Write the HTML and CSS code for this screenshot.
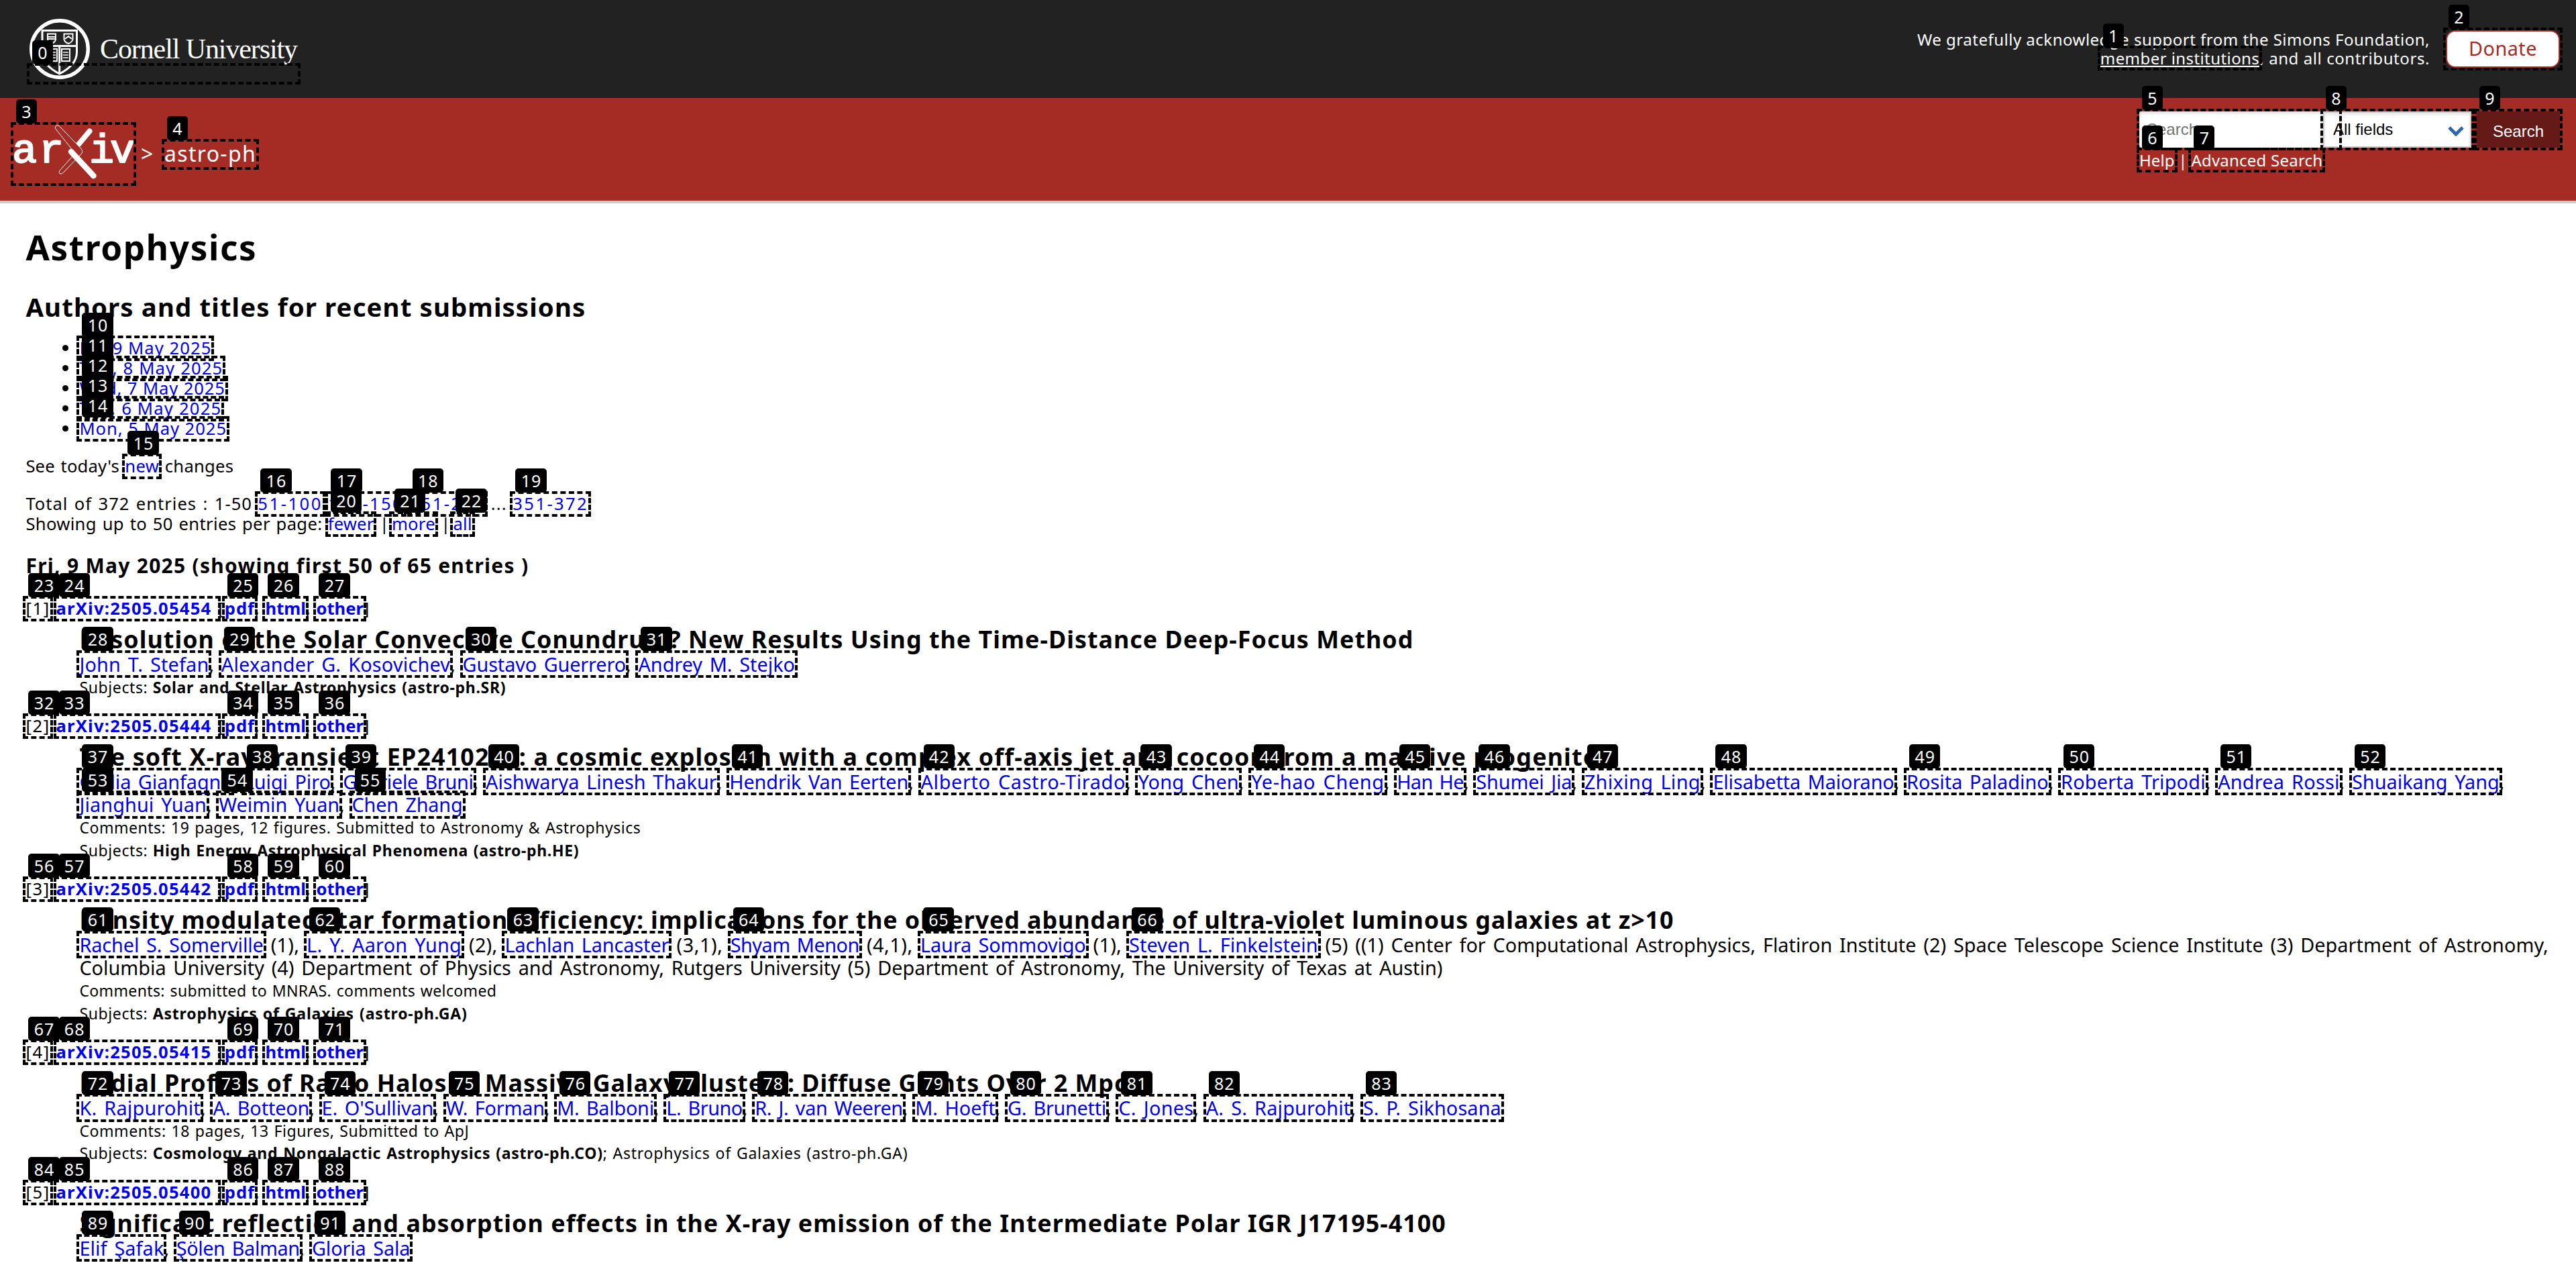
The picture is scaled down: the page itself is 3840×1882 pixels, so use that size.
FILE: index.html
```html
<!DOCTYPE html>
<html lang="en">
<head>
<meta charset="utf-8">
<title>Astrophysics</title>
<link rel="stylesheet" href="styles.css">
</head>
<body>
<header>
  <div class="topbar">
    <a class="brand mark block">
      <svg class="seal" viewBox="0 0 90 90" fill="none" stroke="#fff">
        <circle cx="45" cy="45" r="42.3" stroke-width="5.4"/>
        <path d="M19 17.5H70.500V50C70.500 64 60 74 44.700 82C29 74 19 64 19 50Z" stroke-width="3"/>
        <path d="M19 40.500H70.500M44.700 42V80" stroke-width="3"/>
        <path d="M27 22.500H39V31Q38 35 33 37Q28 35 27 31ZM27 27H39M27 30H39M51.500 22.500H64.500V31Q63 35 58 37Q52.500 35 51.500 31ZM53 30L58 26L63 30" stroke-width="2"/>
        <path d="M29 45H41V63H29ZM48 45H60V63H48Z" stroke-width="2"/>
        <path d="M31 50H39M31 54H39M31 58H39M50 50H58M50 54H58M50 58H58" stroke-width="1.600"/>
      </svg>
      <span class="brand-name"><span data-w="294">Cornell University</span></span>
      <b class="tag">0</b>
    </a>
    <div class="thanks">
      <div class="support"><span data-w="764">We gratefully acknowledge support from the Simons Foundation,</span><br><a class="mark under" data-w="237.5">member institutions<b class="tag">1</b></a><span data-w="253.7">, and all contributors.</span></div>
      <a class="donate mark block"><span data-w="102">Donate</span><b class="tag">2</b></a>
    </div>
  </div>
  <div class="redbar">
    <div class="crumbs">
      <a class="logo mark block">
        <svg viewBox="0 0 179 87">
          <g class="logo-type"><text x="-2" y="56">a</text><text x="38" y="56">r</text><text x="113" y="56">i</text><text x="144" y="56">v</text></g>
          <path d="M113.500 9.500L95.500 31" stroke="#fff" stroke-width="8" stroke-linecap="round"/>
          <path d="M62.500 5.500Q62 1 65.500 .8Q67.500 .7 69 2.500L100.500 35Q104.500 39.500 101 43.500L74 71.500Q71 74.500 68.800 72.500Q67 70.500 69.500 67.500L92 42.500Z" fill="#a52c25" stroke="#fff"/>
          <path d="M86 40L119.500 76" stroke="#fff" stroke-width="8.500" stroke-linecap="round"/>
        </svg>
        <b class="tag">3</b>
      </a>
      <span class="sep">&gt;</span>
      <a class="mark crumb" data-w="137">astro-ph<b class="tag">4</b></a>
    </div>
    <div class="search">
      <div class="controls">
        <label class="field mark block"><input placeholder="Search"><b class="tag">5</b></label>
        <div class="select mark block"><span>All fields</span><svg viewBox="0 0 24 16"><path d="M2 3L12 13L22 3" fill="none" stroke="#2c68ab" stroke-width="5"/></svg><b class="tag t8">8</b></div>
        <div class="go mark block">Search<b class="tag">9</b></div>
      </div>
      <div class="help"><a class="mark" data-w="52.5">Help<b class="tag">6</b></a><span class="bar">|</span><a class="mark" data-w="196">Advanced Search<b class="tag">7</b></a></div>
    </div>
  </div>
</header>
<main>
  <h1><span data-w="345">Astrophysics</span></h1>
  <h2><span data-w="835">Authors and titles for recent submissions</span></h2>
  <ul>
    <li><a class="mark" data-w="197">Fri, 9 May 2025<b class="tag">10</b></a></li>
    <li><a class="mark" data-w="214">Thu, 8 May 2025<b class="tag">11</b></a></li>
    <li><a class="mark" data-w="217.5">Wed, 7 May 2025<b class="tag">12</b></a></li>
    <li><a class="mark" data-w="212">Tue, 6 May 2025<b class="tag">13</b></a></li>
    <li><a class="mark" data-w="219.6">Mon, 5 May 2025<b class="tag">14</b></a></li>
  </ul>
  <p><span data-w="139.5">See today's</span> <a class="mark" data-w="51">new<b class="tag">15</b></a> <span data-w="102.5">changes</span></p>
  <p><span data-w="337.5">Total of 372 entries : 1-50</span> <a class="mark" data-w="96.500">51-100<b class="tag">16</b></a> <a class="mark" data-w="112.8">101-150<b class="tag">17</b></a> <a class="mark" data-w="112.8">151-200<b class="tag">18</b></a> <span data-w="24">...</span> <a class="mark" data-w="112.8">351-372<b class="tag">19</b></a></p>
  <p class="tight"><span data-w="442">Showing up to 50 entries per page:</span> <a class="mark" data-w="68.500">fewer<b class="tag">20</b></a> <span data-w="9.600">|</span> <a class="mark" data-w="65">more<b class="tag">21</b></a> <span data-w="9.600">|</span> <a class="mark" data-w="28.5">all<b class="tag">22</b></a></p>
  <h3><span data-w="750">Fri, 9 May 2025 (showing first 50 of 65 entries )</span></h3>

  <article>
    <div class="id"><a class="mark num" data-w="36.5">[1]<b class="tag">23</b></a> <a class="mark" data-w="241.7">arXiv:2505.05454 <b class="tag">24</b></a><span data-w="9.6">[</span><a class="mark" data-w="45.1">pdf<b class="tag">25</b></a>, <a class="mark" data-w="60.5">html<b class="tag">26</b></a>, <a class="mark" data-w="70.4">other<b class="tag">27</b></a>]</div>
    <div class="title"><span data-w="1989">Resolution of the Solar Convective Conundrum? New Results Using the Time-Distance Deep-Focus Method</span></div>
    <div class="authors"><a class="mark" data-w="193">John T. Stefan<b class="tag">28</b></a>, <a class="mark" data-w="341.4">Alexander G. Kosovichev<b class="tag">29</b></a>, <a class="mark" data-w="243.4">Gustavo Guerrero<b class="tag">30</b></a>, <a class="mark" data-w="233.6">Andrey M. Stejko<b class="tag">31</b></a></div>
    <div class="meta"><span data-w="102">Subjects:</span> <b data-w="526.5">Solar and Stellar Astrophysics (astro-ph.SR)</b></div>
  </article>

  <article>
    <div class="id"><a class="mark num" data-w="36.5">[2]<b class="tag">32</b></a> <a class="mark" data-w="241.7">arXiv:2505.05444 <b class="tag">33</b></a><span data-w="9.6">[</span><a class="mark" data-w="45.1">pdf<b class="tag">34</b></a>, <a class="mark" data-w="60.5">html<b class="tag">35</b></a>, <a class="mark" data-w="70.4">other<b class="tag">36</b></a>]</div>
    <div class="title"><span data-w="2282">The soft X-ray transient EP241021a: a cosmic explosion with a complex off-axis jet and cocoon from a massive progenitor</span></div>
    <div class="authors"><a class="mark" data-w="227">Giulia Gianfagna<b class="tag">37</b></a>, <a class="mark" data-w="129">Luigi Piro<b class="tag">38</b></a>, <a class="mark" data-w="194.4">Gabriele Bruni<b class="tag">39</b></a>, <a class="mark" data-w="344.7">Aishwarya Linesh Thakur<b class="tag">40</b></a>, <a class="mark" data-w="267">Hendrik Van Eerten<b class="tag">41</b></a>, <a class="mark" data-w="305.5">Alberto Castro-Tirado<b class="tag">42</b></a>, <a class="mark" data-w="150.4">Yong Chen<b class="tag">43</b></a>, <a class="mark" data-w="198.5">Ye-hao Cheng<b class="tag">44</b></a>, <a class="mark" data-w="99.8">Han He<b class="tag">45</b></a>, <a class="mark" data-w="143">Shumei Jia<b class="tag">46</b></a>, <a class="mark" data-w="173.2">Zhixing Ling<b class="tag">47</b></a>, <a class="mark" data-w="270.3">Elisabetta Maiorano<b class="tag">48</b></a>, <a class="mark" data-w="211.6">Rosita Paladino<b class="tag">49</b></a>, <a class="mark" data-w="215.7">Roberta Tripodi<b class="tag">50</b></a>, <a class="mark" data-w="181.4">Andrea Rossi<b class="tag">51</b></a>, <a class="mark" data-w="219.8">Shuaikang Yang<b class="tag">52</b></a>,<br><a class="mark" data-w="189.5">Jianghui Yuan<b class="tag">53</b></a>, <a class="mark" data-w="179.8">Weimin Yuan<b class="tag">54</b></a>, <a class="mark" data-w="165">Chen Zhang<b class="tag">55</b></a></div>
    <div class="meta"><span data-w="837">Comments: 19 pages, 12 figures. Submitted to Astronomy &amp; Astrophysics</span></div>
    <div class="meta more"><span data-w="102">Subjects:</span> <b data-w="635.5">High Energy Astrophysical Phenomena (astro-ph.HE)</b></div>
  </article>

  <article>
    <div class="id"><a class="mark num" data-w="36.5">[3]<b class="tag">56</b></a> <a class="mark" data-w="241.7">arXiv:2505.05442 <b class="tag">57</b></a><span data-w="9.6">[</span><a class="mark" data-w="45.1">pdf<b class="tag">58</b></a>, <a class="mark" data-w="60.5">html<b class="tag">59</b></a>, <a class="mark" data-w="70.4">other<b class="tag">60</b></a>]</div>
    <div class="title"><span data-w="2377">Density modulated star formation efficiency: implications for the observed abundance of ultra-violet luminous galaxies at z&gt;10</span></div>
    <div class="authors"><a class="mark" data-w="274.4">Rachel S. Somerville<b class="tag">61</b></a><span data-w="64.3"> (1), </span><a class="mark" data-w="231">L. Y. Aaron Yung<b class="tag">62</b></a><span data-w="64.3"> (2), </span><a class="mark" data-w="245">Lachlan Lancaster<b class="tag">63</b></a><span data-w="91.3"> (3,1), </span><a class="mark" data-w="192">Shyam Menon<b class="tag">64</b></a><span data-w="91.3"> (4,1), </span><a class="mark" data-w="246.7">Laura Sommovigo<b class="tag">65</b></a><span data-w="64.3"> (1), </span><a class="mark" data-w="281.8">Steven L. Finkelstein<b class="tag">66</b></a><span data-w="1834"> (5) ((1) Center for Computational Astrophysics, Flatiron Institute (2) Space Telescope Science Institute (3) Department of Astronomy,</span><br><span data-w="2032">Columbia University (4) Department of Physics and Astronomy, Rutgers University (5) Department of Astronomy, The University of Texas at Austin)</span></div>
    <div class="meta"><span data-w="622">Comments: submitted to MNRAS. comments welcomed</span></div>
    <div class="meta more"><span data-w="102">Subjects:</span> <b data-w="469">Astrophysics of Galaxies (astro-ph.GA)</b></div>
  </article>

  <article>
    <div class="id"><a class="mark num" data-w="36.5">[4]<b class="tag">67</b></a> <a class="mark" data-w="241.7">arXiv:2505.05415 <b class="tag">68</b></a><span data-w="9.6">[</span><a class="mark" data-w="45.1">pdf<b class="tag">69</b></a>, <a class="mark" data-w="60.5">html<b class="tag">70</b></a>, <a class="mark" data-w="70.4">other<b class="tag">71</b></a>]</div>
    <div class="title"><span data-w="1562">Radial Profiles of Radio Halos in Massive Galaxy Clusters: Diffuse Giants Over 2 Mpc</span></div>
    <div class="authors"><a class="mark" data-w="180.6">K. Rajpurohit<b class="tag">72</b></a>, <a class="mark" data-w="143.8">A. Botteon<b class="tag">73</b></a>, <a class="mark" data-w="166.7">E. O'Sullivan<b class="tag">74</b></a>, <a class="mark" data-w="147">W. Forman<b class="tag">75</b></a>, <a class="mark" data-w="144.7">M. Balboni<b class="tag">76</b></a>, <a class="mark" data-w="113.6">L. Bruno<b class="tag">77</b></a>, <a class="mark" data-w="220.6">R. J. van Weeren<b class="tag">78</b></a>, <a class="mark" data-w="119.3">M. Hoeft<b class="tag">79</b></a>, <a class="mark" data-w="147">G. Brunetti<b class="tag">80</b></a>, <a class="mark" data-w="112">C. Jones<b class="tag">81</b></a>, <a class="mark" data-w="215.7">A. S. Rajpurohit<b class="tag">82</b></a>, <a class="mark" data-w="206">S. P. Sikhosana<b class="tag">83</b></a></div>
    <div class="meta"><span data-w="581">Comments: 18 pages, 13 Figures, Submitted to ApJ</span></div>
    <div class="meta more"><span data-w="102">Subjects:</span> <b data-w="671">Cosmology and Nongalactic Astrophysics (astro-ph.CO)</b><span data-w="454.7">; Astrophysics of Galaxies (astro-ph.GA)</span></div>
  </article>

  <article>
    <div class="id"><a class="mark num" data-w="36.5">[5]<b class="tag">84</b></a> <a class="mark" data-w="241.7">arXiv:2505.05400 <b class="tag">85</b></a><span data-w="9.6">[</span><a class="mark" data-w="45.1">pdf<b class="tag">86</b></a>, <a class="mark" data-w="60.5">html<b class="tag">87</b></a>, <a class="mark" data-w="70.4">other<b class="tag">88</b></a>]</div>
    <div class="title"><span data-w="2037.5">Significant reflection and absorption effects in the X-ray emission of the Intermediate Polar IGR J17195-4100</span></div>
    <div class="authors"><a class="mark" data-w="126">Elif Şafak<b class="tag">89</b></a>, <a class="mark" data-w="183.8">Şölen Balman<b class="tag">90</b></a>, <a class="mark" data-w="146.3">Gloria Sala<b class="tag">91</b></a></div>
  </article>
</main>
<script src="fit.js"></script>
</body>
</html>
```
FILE: fit.js
```js
// Tracks each run of text out (or in) to its measured width.
const range = document.createRange();
for (const el of document.querySelectorAll('[data-w]')) {
  const text = el.firstChild;
  const goal = parseFloat(el.dataset.w);
  let spacing = 0;
  for (let pass = 0; pass < 3; pass++) {
    range.selectNodeContents(text);
    spacing += (goal - range.getBoundingClientRect().width) / text.length;
    el.style.letterSpacing = spacing + 'px';
  }
}
```
FILE: styles.css
```css
* { box-sizing: border-box; }
html { overflow: hidden; }
body {
  margin: 0;
  height: 1882px;
  overflow: hidden;
  background: #fff;
  color: #000;
  font: 25.6px/30px "Noto Sans", "Open Sans", sans-serif;
}
a { color: #0000ee; }

/* numbered link outlines */
.mark { position: relative; }
.mark::before {
  content: "";
  position: absolute;
  inset: calc(.102em - 4px) -4px calc(.082em - 4px) -4px;
  border: 4px dashed #000;
}
.mark.block::before { inset: -4px; }
.tag {
  position: absolute;
  left: 4px;
  top: -35.4px;
  height: 36px;
  padding: 0 7.3px 0 8.3px;
  border-radius: 5px;
  background: #000;
  color: #fff;
  font: 25px/36px "Noto Sans", sans-serif;
  letter-spacing: 1px;
  word-spacing: 0;
  white-space: nowrap;
}
.block > .tag { top: -38px; }

/* university bar */
.topbar {
  display: flex;
  justify-content: space-between;
  align-items: center;
  height: 146px;
  padding: 0 24px 0 44px;
  background: #222;
  color: #fff;
}
.brand { display: flex; align-items: center; width: 400px; height: 146px; color: #fff; }
.brand.mark::before { inset: 94px -4px 20px; }
.brand > .tag { top: 60px; }
.seal { width: 90px; height: 90px; margin-right: 15px; }
.brand-name { font: 42px/50px "Liberation Serif", serif; white-space: nowrap; }
.thanks { display: flex; gap: 24px; }
.support { font-size: 24px; line-height: 28px; text-align: right; }
.support a { color: #fff; text-decoration: underline; text-decoration-thickness: 2px; text-underline-offset: 2px; }
.donate {
  width: 170px;
  height: 56px;
  border: 2px solid #a52c25;
  border-radius: 14px;
  background: #fff;
  color: #a52c25;
  font-size: 28.8px;
  line-height: 49px;
  text-align: center;
}
.donate.mark::before { inset: -6px; }
.donate > .tag { left: 2px; top: -40px; }

/* site bar */
.redbar {
  display: flex;
  justify-content: space-between;
  height: 157px;
  padding: 20px 24px 0 20px;
  border-bottom: 4px solid #ccc;
  background: #a52c25;
  color: #fff;
}
.redbar a { color: #fff; }
.crumbs { display: flex; padding-top: 20px; font-size: 32px; line-height: 44px; }
.logo { width: 179px; height: 87px; }
.logo svg { display: block; width: 179px; height: 87px; }
.logo-type { font: 62px "Liberation Mono", monospace; fill: #fff; stroke: #fff; stroke-width: 2px; stroke-linejoin: round; }
.sep { width: 46px; padding: 21px 0 0 11px; }
.crumb { margin-top: 21px; height: 44px; }
.crumb.mark::before { inset: 0 -4px -2px; }
.crumb > .tag { top: -34px; }
.controls { display: flex; font: 24px/50px "Liberation Sans", Arial, sans-serif; }
.field { width: 298px; height: 54px; }
.field input {
  display: block;
  width: 298px;
  height: 54px;
  padding: 0 11px;
  border: 0;
  border-radius: 4px;
  background: #fff;
  box-shadow: inset 0 3px 4px #ddd;
  font: inherit;
}
.field input::placeholder { color: #757575; }
.select {
  display: flex;
  justify-content: space-between;
  align-items: center;
  width: 221px;
  height: 54px;
  margin: 0 8px 0 -24px;
  padding: 0 9px 0 13px;
  border: 2px solid #ccc;
  background: #fff;
  box-shadow: inset 0 3px 4px #e4e4e4;
  color: #000;
}
.select.mark::before { inset: -6px; }
.select > .tag { left: 2px; top: -40px; }
.field::before { z-index: 1; }
.select svg { width: 24px; height: 16px; margin-top: 3px; }
.go { width: 124px; height: 54px; padding-top: 5px; border-radius: 4px; background: #651a17; text-align: center; }
.help { margin-top: 5px; font-size: 24px; line-height: 28px; }
.bar { display: inline-block; width: 24.9px; text-align: center; }

/* listing */
main { padding: 35px 0 0 38.4px; white-space: nowrap; }
h1 { margin: 0; font-size: 51.2px; line-height: 60px; }
h2 { margin: 36px 0 0; font-size: 38.4px; line-height: 46px; }
h3 { margin: 29px 0 0; font-size: 29.95px; line-height: 36px; }
ul { margin: 24px 0 0; padding-left: 80px; }
p { margin: 26px 0 0; word-spacing: 1.8px; }
p.tight { margin: 0; }
article { margin-top: 29.5px; }
h3 + article { margin-top: 31px; }
.id { word-spacing: 2px; }
.id a { font-weight: bold; }
.id .num { color: #000; font-weight: normal; }
.title, .authors, .meta { margin-left: 80px; }
.title { margin-top: 8.7px; font-size: 35.8px; font-weight: bold; line-height: 42px; }
.authors { font-size: 28.8px; line-height: 34.3px; word-spacing: 3.2px; }
.meta { margin-top: 3.6px; font-size: 23.04px; line-height: 27px; word-spacing: 1.3px; }
.meta.more { margin-top: 6.7px; }
```
